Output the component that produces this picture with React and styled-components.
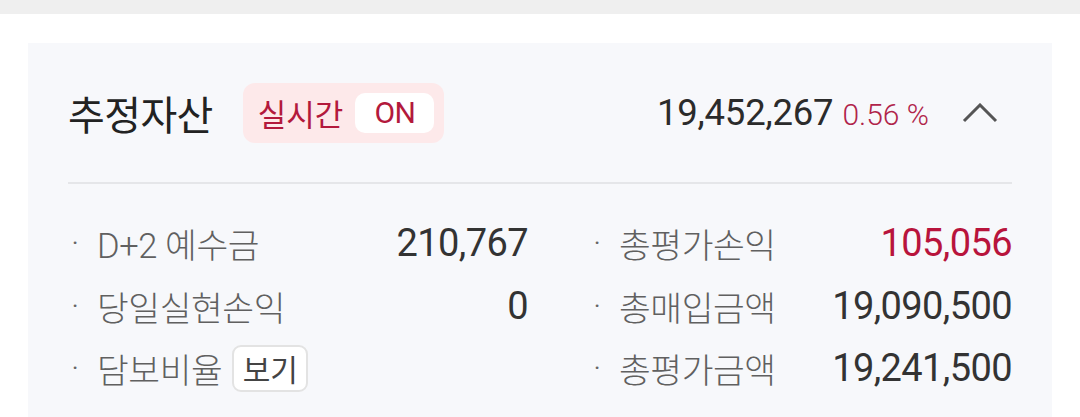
import React from 'react';
import styled, { createGlobalStyle } from 'styled-components';

const GlobalStyle = createGlobalStyle`
  html, body {
    margin: 0;
    padding: 0;
    background: #ffffff;
  }
  body {
    font-family: Roboto, "Noto Sans CJK KR", sans-serif;
    -webkit-font-smoothing: antialiased;
  }
`;

const Page = styled.div`
  width: 1080px;
  height: 417px;
  overflow: hidden;
  background: #ffffff;
`;

const TopStrip = styled.div`
  height: 14px;
  background: #efefef;
`;

const Card = styled.section`
  margin: 29px 28px 0 28px;
  padding: 0 40px 40px 40px;
  background: #f7f8fb;
`;

const Header = styled.header`
  display: flex;
  align-items: center;
  height: 139px;
  border-bottom: 2px solid #e5e6e9;
`;

const Title = styled.h2`
  margin: 0;
  font-family: "Noto Sans CJK KR", sans-serif;
  font-size: 40px;
  font-weight: 400;
  color: #222222;
  letter-spacing: -0.6px;
`;

const Badge = styled.div`
  display: flex;
  align-items: center;
  gap: 12px;
  height: 60px;
  margin-left: 30px;
  padding: 0 10px 0 15px;
  border-radius: 12px;
  background: #fde9ea;
  color: #b3193c;
  font-size: 31px;
`;

const Pill = styled.span`
  display: inline-flex;
  align-items: center;
  justify-content: center;
  height: 40px;
  padding: 0 19px;
  border-radius: 10px;
  background: #ffffff;
  font-size: 30px;
  letter-spacing: -0.5px;
`;

const HeaderRight = styled.div`
  margin-left: auto;
  display: flex;
  align-items: baseline;
`;

const Total = styled.span`
  font-size: 36.5px;
  color: #2b2b2b;
  letter-spacing: -0.2px;
`;

const Rate = styled.span`
  margin-left: 9px;
  font-size: 30px;
  font-weight: 300;
  color: #b0244a;
`;

const Toggle = styled.button`
  display: flex;
  align-items: center;
  justify-content: center;
  width: 40px;
  height: 40px;
  margin-left: 31px;
  margin-right: 12px;
  padding: 0;
  border: 0;
  background: none;
  color: #555555;
`;

const Grid = styled.div`
  display: grid;
  grid-template-columns: 460px 1fr;
  column-gap: 62px;
  padding-top: 28px;
`;

const Column = styled.div`
  display: flex;
  flex-direction: column;
`;

const Row = styled.div`
  display: flex;
  align-items: center;
  justify-content: space-between;
  height: 62.5px;
`;

const Label = styled.span`
  display: flex;
  align-items: center;
  font-size: 34.5px;
  font-weight: 300;
  color: #606060;
  letter-spacing: -0.4px;
`;

const Bullet = styled.span`
  display: inline-block;
  width: 25px;
  padding-left: 4px;
  font-size: 24px;
  font-weight: 400;
  color: #666666;
`;

const Value = styled.span`
  font-size: 38px;
  color: ${p => (p.$up ? '#b8143c' : '#333333')};
  letter-spacing: -0.6px;
`;

const ViewButton = styled.button`
  display: inline-flex;
  align-items: center;
  justify-content: center;
  width: 76px;
  height: 47px;
  margin-left: 10px;
  padding: 0;
  border: 2px solid #e3e3e3;
  border-radius: 9px;
  background: #ffffff;
  font-family: inherit;
  font-size: 30px;
  color: #444444;
`;

const Chevron = () => (
  <svg width="36" height="20" viewBox="0 0 36 20" fill="none">
    <polyline points="2,18 18,2 34,18" stroke="currentColor" strokeWidth="3" />
  </svg>
);

const left = [
  { label: 'D+2 예수금', value: '210,767' },
  { label: '당일실현손익', value: '0' },
  { label: '담보비율', button: '보기' },
];

const right = [
  { label: '총평가손익', value: '105,056', up: true },
  { label: '총매입금액', value: '19,090,500' },
  { label: '총평가금액', value: '19,241,500' },
];

const renderRows = rows =>
  rows.map(r => (
    <Row key={r.label}>
      <Label>
        <Bullet>·</Bullet>
        {r.label}
        {r.button && <ViewButton>{r.button}</ViewButton>}
      </Label>
      {r.value && <Value $up={r.up}>{r.value}</Value>}
    </Row>
  ));

export default function App() {
  return (
    <Page>
      <GlobalStyle />
      <TopStrip />
      <Card>
        <Header>
          <Title>추정자산</Title>
          <Badge>
            실시간
            <Pill>ON</Pill>
          </Badge>
          <HeaderRight>
            <Total>19,452,267</Total>
            <Rate>0.56 %</Rate>
          </HeaderRight>
          <Toggle aria-label="접기">
            <Chevron />
          </Toggle>
        </Header>
        <Grid>
          <Column>{renderRows(left)}</Column>
          <Column>{renderRows(right)}</Column>
        </Grid>
      </Card>
    </Page>
  );
}
